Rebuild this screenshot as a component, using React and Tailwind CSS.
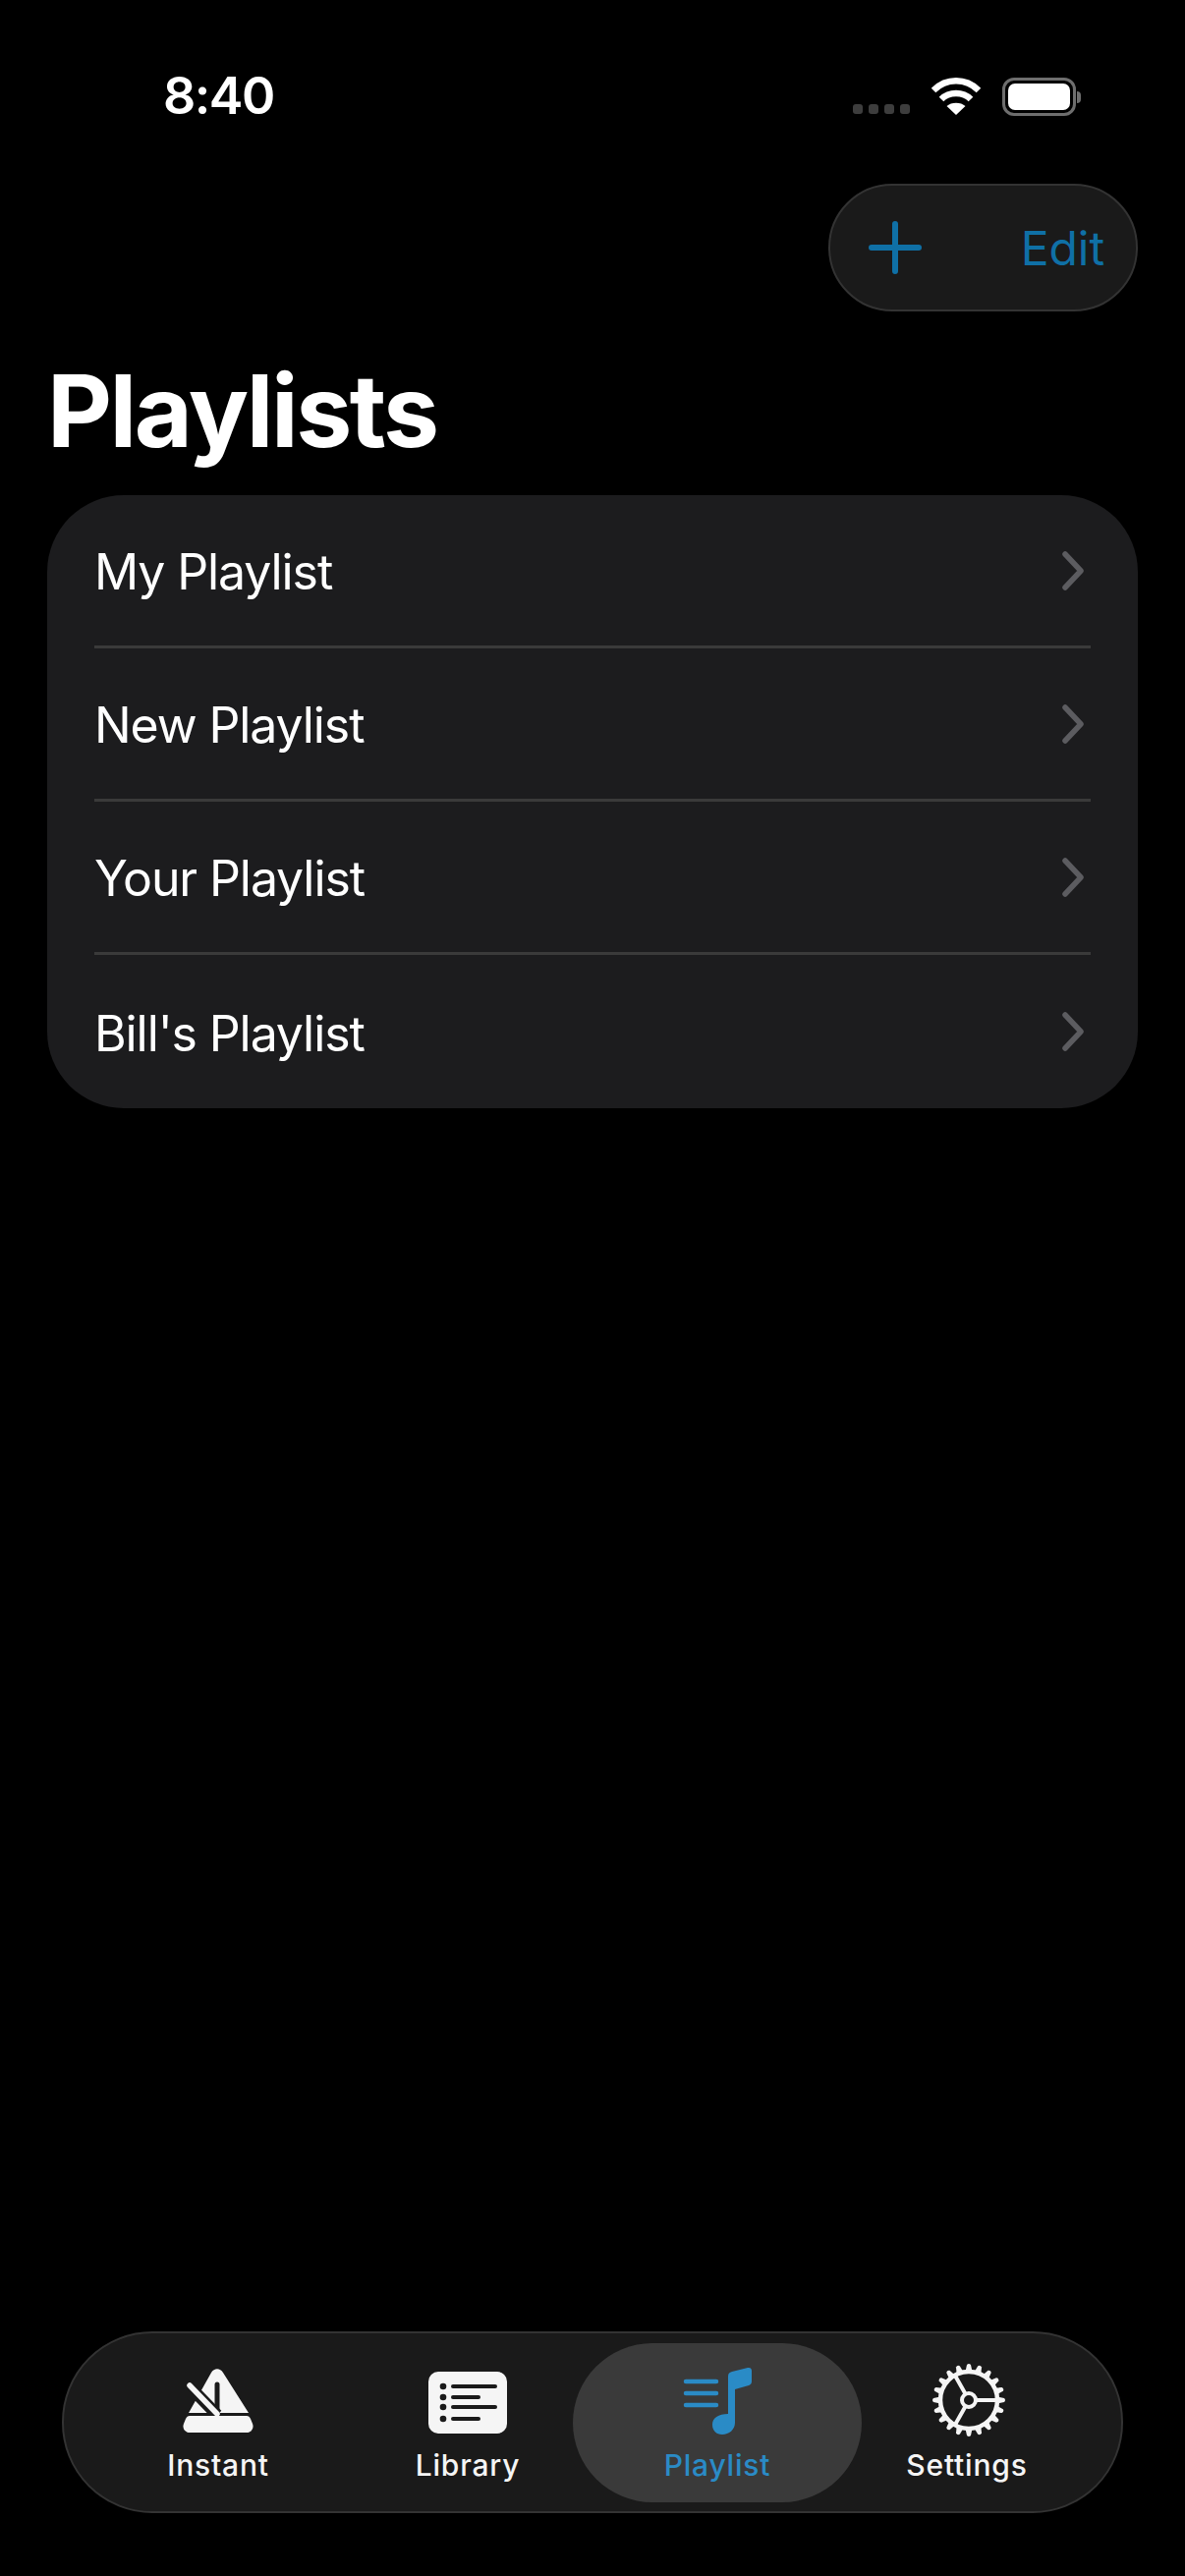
const playlists = ['My Playlist', 'New Playlist', 'Your Playlist', "Bill's Playlist"];

const Chevron = () => (
  <svg width="24" height="40" viewBox="0 0 24 40" fill="none" stroke="#5c5c60" strokeWidth="5.5" strokeLinecap="round" strokeLinejoin="round">
    <path d="M4 3 L20 20 L4 37" />
  </svg>
);

const Wifi = () => (
  <svg width="50" height="38" viewBox="0 0 50 38" fill="none" stroke="white" strokeWidth="6.5">
    <path d="M2 13 C15 0 35 0 48 13" />
    <path d="M10 22 C18 14 32 14 40 22" />
    <path d="M25 38 L15.5 29 C20 24.5 30 24.5 34.5 29 Z" fill="white" stroke="none" />
  </svg>
);

const Metronome = () => (
  <svg width="72" height="66" viewBox="0 0 72 66" fill="none">
    <path d="M29 4 C32 -1 38 -1 41 4 L67 45 H6 Z" fill="#f5f5f5" />
    <path d="M35 16 V45" stroke="#1a1a1a" strokeWidth="5" strokeLinecap="round" />
    <path d="M5 16 L35 47" stroke="#1a1a1a" strokeWidth="12" />
    <path d="M7 17 L35 46" stroke="#f5f5f5" strokeWidth="5.5" strokeLinecap="round" />
    <path d="M7 48 H65 C67 48 68 49 69 51 L71 56 C73 61 69 65 65 65 H7 C3 65 -1 61 1 56 L3 51 C4 49 5 48 7 48 Z" fill="#f5f5f5" />
  </svg>
);

const LibraryIcon = () => (
  <svg width="80" height="63" viewBox="0 0 80 63" fill="none">
    <rect width="80" height="63" rx="10" fill="#f5f5f5" />
    {[[15, 68], [26, 51], [36, 68], [48, 51]].map(([y, end]) => (
      <g key={y}>
        <circle cx="15" cy={y} r="3.3" fill="#1a1a1a" />
        <path d={`M25 ${y} H${end}`} stroke="#1a1a1a" strokeWidth="4" strokeLinecap="round" />
      </g>
    ))}
  </svg>
);

const PlaylistIcon = () => (
  <svg width="76" height="72" viewBox="0 0 76 72" fill="none" className="translate-y-[3px]">
    <path d="M6 16 H37 M6 28 H37 M6 40 H37" stroke="#2a8bc6" strokeWidth="4.5" strokeLinecap="round" />
    <path d="M49 11 C49 8 50 7 53 6 L69 2 C72 1.500 73 3 73 5 V16 C73 18 72 19 70 20 L56 24 V58 C56 65 50 70 43 70 C37 70 33 66 33 60 C33 53 39 49 49 49 Z" fill="#2a8bc6" />
  </svg>
);

const Gear = () => {
  const teeth = Array.from({ length: 20 }, (_, i) => i * 18);
  return (
    <svg width="76" height="76" viewBox="-38 -38 76 76" fill="none" className="translate-x-[2px] translate-y-[4px]">
      {teeth.map((deg) => (
        <path key={deg} d="M-3.500 -29 L-2 -36 Q0 -38 2 -36 L3.500 -29 Z" fill="#f5f5f5" transform={`rotate(${deg})`} />
      ))}
      <circle r="29" stroke="#f5f5f5" strokeWidth="4.500" />
      <path d="M6 0 H28 M-3 -5.500 L-14 -25 M-3 5.500 L-14 25" stroke="#f5f5f5" strokeWidth="4" />
      <circle r="7" stroke="#f5f5f5" strokeWidth="4" />
    </svg>
  );
};

const tabs = [
  { label: 'Instant', icon: <Metronome /> },
  { label: 'Library', icon: <LibraryIcon /> },
  { label: 'Playlist', icon: <PlaylistIcon />, active: true },
  { label: 'Settings', icon: <Gear /> },
];

export default function App() {
  return (
    <div className="bg-black min-h-[2622px] text-white flex flex-col font-['Inter',sans-serif]">
      {/* status bar */}
      <div className="h-[187px] flex justify-between items-start pt-[69px] pl-[166px] pr-[106px]">
        <span className="text-[52px] leading-[58px] font-semibold tracking-[-1.5px]">8:40</span>
        <div className="flex items-start gap-[22px] pt-[10px]">
          <div className="flex gap-[6px] pt-[27px] -ml-[3px]">
            {[0, 1, 2, 3].map((d) => (
              <div key={d} className="w-[10px] h-[10px] rounded-[3px] bg-[#3d3d3d]" />
            ))}
          </div>
          <Wifi />
          <div className="flex items-center">
            <div className="w-[75px] h-[39px] rounded-[12px] border-[3px] border-[#6e6e6e] p-[3px]">
              <div className="w-full h-full rounded-[7px] bg-white" />
            </div>
            <div className="w-[4px] h-[12px] ml-[1px] rounded-r-full bg-[#6e6e6e]" />
          </div>
        </div>
      </div>

      {/* edit / add */}
      <div className="flex justify-end px-[48px]">
        <div className="w-[315px] h-[130px] rounded-[65px] bg-[#1a1a1a] border-2 border-[#333333] flex items-center justify-between pl-[39px] pr-[32px]">
          <svg width="54" height="54" viewBox="0 0 54 54" fill="none" stroke="#0f70a6" strokeWidth="6" strokeLinecap="round">
            <path d="M27 3 V51 M3 27 H51" />
          </svg>
          <span className="text-[48px] leading-none tracking-[-0.1px] pt-[2px] text-[#0f70a6]">Edit</span>
        </div>
      </div>

      <h1 className="text-[102px] leading-[124px] font-bold tracking-[-2.5px] pl-[48px] pt-[39px] pb-[24px]">Playlists</h1>

      {/* playlists */}
      <div className="mx-[48px] rounded-[78px] bg-[#1c1c1e] pl-[48px] pr-[48px]">
        {playlists.map((name, i) => (
          <div key={name} className={`h-[156px] flex items-center justify-between pr-[6px] ${i < playlists.length - 1 ? 'border-b-[3px] border-[#3a3a3a]' : ''}`}>
            <span className="text-[50px] leading-none tracking-[-1.1px] pt-[3px]">{name}</span>
            <Chevron />
          </div>
        ))}
      </div>

      {/* tab bar */}
      <div className="mt-auto mb-[64px] ml-[63px] w-[1080px] h-[185px] rounded-[92px] bg-[#1a1a1a] border-2 border-[#333333] flex items-center pl-[30px]">
        {tabs.map((t) => (
          <div key={t.label} className={`shrink-0 flex flex-col items-center ${t.active ? 'w-[294px] h-[162px] -mx-[20px] rounded-[81px] bg-[#3a3a3a]' : 'w-[254px] h-[162px]'}`}>
            <div className="h-[96px] flex items-end justify-center pb-[4px]">{t.icon}</div>
            <span className={`text-[30px] leading-[40px] tracking-[0.8px] font-medium pt-[8px] ${t.active ? 'text-[#2a8bc6]' : 'text-[#f5f5f5]'}`}>{t.label}</span>
          </div>
        ))}
      </div>
    </div>
  );
}
